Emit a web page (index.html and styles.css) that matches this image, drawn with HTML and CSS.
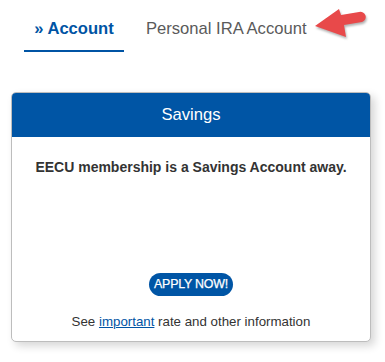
FILE: index.html
```html
<!DOCTYPE html>
<html>
<head>
<meta charset="utf-8">
<link rel="stylesheet" href="styles.css">
</head>
<body>
<div class="page">
  <nav class="tabs">
    <a class="tab tab-active">» Account</a>
    <a class="tab">Personal IRA Account</a>
  </nav>
  <svg class="arrow" width="60" height="45" viewBox="310 0 60 45" aria-hidden="true">
    <path d="M315 26 L339 9 L341 15 L359 12 A5 5 0 0 1 362 22 L344 25 L346 37 Z" fill="#e8494a"/>
  </svg>
  <section class="card">
    <header class="card-header">Savings</header>
    <div class="card-body">
      <p class="lead">EECU membership is a Savings Account away.</p>
      <a class="btn">APPLY NOW!</a>
      <p class="info">See <a class="link">important</a> rate and other information</p>
    </div>
  </section>
</div>
</body>
</html>
```
FILE: styles.css
```css
html, body {
  margin: 0;
  padding: 0;
  background: #fff;
}
body {
  font-family: "Liberation Sans", Arial, sans-serif;
  width: 385px;
  height: 362px;
  overflow: hidden;
}
.page {
  position: relative;
  padding-top: 0;
}
.tabs {
  display: flex;
  gap: 12px;
  padding-left: 24px;
}
.tab {
  display: block;
  font-size: 16.6px;
  line-height: 20px;
  padding: 19px 10px 11px;
  border-bottom: 2px solid transparent;
  color: #5a5a5a;
  white-space: nowrap;
}
.tab-active {
  width: 80px;
  text-align: center;
  font-weight: bold;
  color: #0054a4;
  border-bottom-color: #0054a4;
}
.arrow {
  position: absolute;
  left: 310px;
  top: 0;
  filter: drop-shadow(1px 2px 1px rgba(0,0,0,0.3));
}
.card {
  margin: 40px 0 0 11px;
  width: 358px;
  border: 1px solid #bdbdbd;
  border-radius: 5px;
  box-shadow: 4px 4px 8px rgba(0,0,0,0.16);
  overflow: hidden;
  background: #fff;
}
.card-header {
  background: #0055a5;
  color: #fff;
  text-align: center;
  font-size: 16.6px;
  line-height: 43px;
  height: 44px;
}
.card-body {
  display: flex;
  flex-direction: column;
  align-items: center;
  padding: 22px 0 11px;
  color: #333;
}
.lead {
  margin: 0;
  font-size: 14px;
  line-height: 16px;
  font-weight: bold;
}
.btn {
  display: block;
  margin-top: 98px;
  width: 84px;
  height: 23px;
  line-height: 23px;
  border-radius: 12px;
  background: #0055a5;
  color: #fff;
  text-align: center;
  font-size: 12.4px;
  letter-spacing: -0.2px;
  -webkit-text-stroke: 0.25px #fff;
}
.info {
  margin: 18px 0 0;
  font-size: 13.3px;
  line-height: 16px;
}
.link {
  color: #0054a4;
  text-decoration: underline;
}
```
